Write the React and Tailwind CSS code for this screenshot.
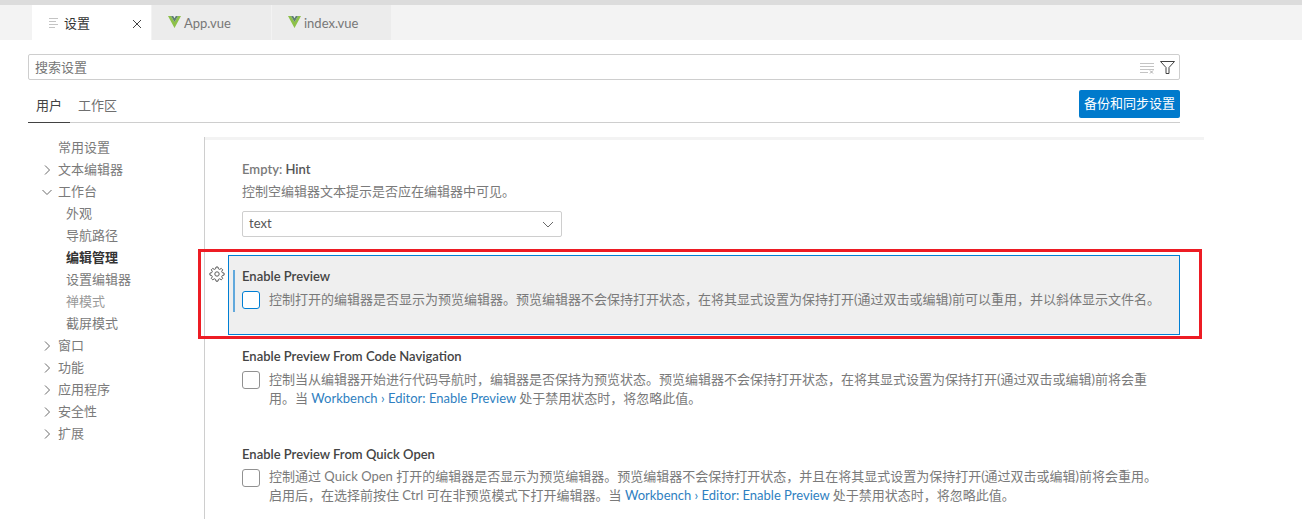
import React from "react";

const font = { fontFamily: 'Lato,"Noto Sans CJK SC",sans-serif' };

function Vue() {
  return (
    <svg width="13" height="12" viewBox="0 0 13 12" className="shrink-0">
      <path d="M0 0h3l3.5 6L10 0h3L6.5 12z" fill="#8dc149" />
      <path d="M3 0h2.2l1.3 2.3L7.8 0H10L6.5 6z" fill="#5f7f73" />
    </svg>
  );
}

function Chevron({ open }) {
  return (
    <svg width="16" height="16" viewBox="0 0 16 16" fill="none" stroke="#6a6a6a" strokeWidth="1" className="shrink-0">
      {open ? <path d="M3.5 6l4.5 4.5L12.5 6" /> : <path d="M6 3.5L10.5 8 6 12.5" />}
    </svg>
  );
}

function Tree({ label, chev, open, child, bold, faded }) {
  return (
    <div className={"h-[22px] flex items-center text-[13px] " + (child ? "pl-[66px] " : "pl-[58px] relative ") + (bold ? "font-semibold text-[#333333]" : faded ? "text-[#9a9a9a]" : "text-[#7a7a7a]")}>
      {chev && (
        <span className="absolute left-[39px] top-[3px]">
          <Chevron open={open} />
        </span>
      )}
      {label}
    </div>
  );
}

function Check({ focus }) {
  return (
    <div className={"w-[18px] h-[18px] rounded-[3px] bg-white border shrink-0 " + (focus ? "border-[#007fd4]" : "border-[#919191]")} />
  );
}

function Link({ children }) {
  return <span className="text-[#2f7fc1]">{children}</span>;
}

export default function App() {
  return (
    <div style={font} className="w-[1302px] h-[519px] overflow-hidden bg-white relative flex flex-col">
      <div className="h-[5px] bg-[#dcdcdc]" />
      <div className="h-[35px] bg-[#f3f3f3] flex pl-[32px] text-[13px]">
        <div className="w-[119px] bg-white flex items-center pl-[17px] pr-[9px] pt-[2px] text-[#333333]">
          <svg width="12" height="12" viewBox="0 0 12 12" stroke="#c4c4c4" strokeWidth="1" className="mr-[3px] -translate-y-[1px]">
            <path d="M0 1.5h9M0 4.5h7M0 7.5h9M0 10.5h6" />
          </svg>
          <span>设置</span>
          <svg width="10" height="10" viewBox="0 0 10 10" stroke="#424242" strokeWidth="1" className="ml-auto">
            <path d="M1 1l8 8M9 1l-8 8" />
          </svg>
        </div>
        <div className="w-[119px] ml-[1px] bg-[#ececec] flex items-center pl-[16px] pt-[2px] gap-[3px] text-[#777777]">
          <span className="-translate-y-[2px]"><Vue /></span>App.vue
        </div>
        <div className="w-[119px] ml-[1px] bg-[#ececec] flex items-center pl-[16px] pt-[2px] gap-[3px] text-[#777777]">
          <span className="-translate-y-[2px]"><Vue /></span>index.vue
        </div>
      </div>

      <div className="pl-[28px] w-[1180px] pt-[14px]">
        <div className="h-[26px] border border-[#cecece] rounded-[2px] flex items-center pl-[6px] pr-[4px] pt-[1px] text-[13px] text-[#767676]">
          <span>搜索设置</span>
          <svg width="15" height="12" viewBox="0 0 15 12" stroke="#c4c4c4" strokeWidth="1" className="ml-auto mr-[5px]">
            <path d="M0 1.5h14M0 4.5h14M0 7.5h14M0 10.5h8" />
            <path d="M10 8.5l3 3M13 8.5l-3 3" stroke="#aaaaaa" />
          </svg>
          <svg width="15" height="15" viewBox="0 0 15 15" fill="none" stroke="#424242" strokeWidth="1">
            <path d="M.5 1.5h14L9 7.5v6H6v-6z" />
          </svg>
        </div>
        <div className="h-[43px] flex items-end border-b border-[#cecece] relative">
          <div className="h-[42px] w-[42px] flex items-center justify-center pt-[9px] text-[13px] text-[#424242] border-b border-[#424242] -mb-[1px]">用户</div>
          <div className="h-[42px] flex items-center pt-[9px] pl-[8px] text-[13px] text-[#6f6f6f]">工作区</div>
          <div className="ml-auto mb-[4px] h-[28px] w-[101px] bg-[#007acc] rounded-[2px] text-white text-[13px] flex items-center justify-center">备份和同步设置</div>
        </div>
      </div>

      <div className="flex flex-1 min-h-0 mt-[14px]">
        <div className="w-[204px] shrink-0">
          <Tree label="常用设置" />
          <Tree label="文本编辑器" chev />
          <Tree label="工作台" chev open />
          <Tree label="外观" child />
          <Tree label="导航路径" child />
          <Tree label="编辑管理" child bold />
          <Tree label="设置编辑器" child />
          <Tree label="禅模式" child faded />
          <Tree label="截屏模式" child />
          <Tree label="窗口" chev />
          <Tree label="功能" chev />
          <Tree label="应用程序" chev />
          <Tree label="安全性" chev />
          <Tree label="扩展" chev />
        </div>
        <div className="flex-1 border-l border-[#cecece] relative">
          <div className="w-[999px] h-[3px] bg-[#f3f3f3]" />
          <div className="pl-[37px] pt-[20px] w-[976px] text-[13px] leading-[19px] text-[#7a7a7a]">
            <div className="font-semibold h-[20px] text-[#7a7a7a]">Empty: <span className="text-[#555555]">Hint</span></div>
            <div className="mt-[2px] h-[19px]">控制空编辑器文本提示是否应在编辑器中可见。</div>
            <div className="mt-[10px] w-[320px] h-[26px] border border-[#cecece] rounded-[2px] flex items-center pl-[6px] pr-[5px] pb-[1px] text-[#555555]">
              text
              <svg width="16" height="16" viewBox="0 0 16 16" fill="none" stroke="#6a6a6a" className="ml-auto"><path d="M3 6l5 5 5-5" /></svg>
            </div>
          </div>

          <div className="relative ml-[23px] mt-[18px] w-[952px] h-[80px] bg-[#efefef] border border-[#007fd4] pl-[13px] pt-[11px] text-[13px] text-[#7a7a7a]">
            <svg width="16" height="16" viewBox="0 0 16 16" fill="none" stroke="#5a5a5a" className="absolute left-[-20px] top-[10px]">
              <circle cx="8" cy="8" r="2.2" />
              <path d="M7 1h2l.4 1.8 1.3.6 1.6-1 1.4 1.4-1 1.6.6 1.3 1.8.4v2l-1.8.4-.6 1.3 1 1.6-1.4 1.4-1.6-1-1.3.6-.4 1.8H7l-.4-1.8-1.3-.6-1.6 1-1.4-1.4 1-1.6-.6-1.3-1.8-.4v-2l1.8-.4.6-1.3-1-1.6 1.4-1.4 1.6 1 1.3-.6z" />
            </svg>
            <div className="absolute left-[4px] top-[14px] w-[2px] h-[42px] bg-[#62a9dc]" />
            <div className="font-semibold h-[19px] leading-[19px] text-[#444444]">Enable Preview</div>
            <div className="flex gap-[9px] mt-[5px]">
              <Check focus />
              <div className="leading-[19px] -mt-[1px]">控制打开的编辑器是否显示为预览编辑器。预览编辑器不会保持打开状态，在将其显式设置为保持打开(通过双击或编辑)前可以重用，并以斜体显示文件名。</div>
            </div>
          </div>

          <div className="pl-[37px] w-[960px] text-[13px] text-[#7a7a7a] leading-[19px]">
            <div className="font-semibold mt-[12px] h-[19px] text-[#444444]">Enable Preview From Code Navigation</div>
            <div className="flex gap-[9px] mt-[5px]">
              <Check />
              <div className="w-[890px] -mt-[1px]">控制当从编辑器开始进行代码导航时，编辑器是否保持为预览状态。预览编辑器不会保持打开状态，在将其显式设置为保持打开(通过双击或编辑)前将会重用。当 <Link>Workbench › Editor: Enable Preview</Link> 处于禁用状态时，将忽略此值。</div>
            </div>
            <div className="font-semibold mt-[37px] h-[19px] text-[#444444]">Enable Preview From Quick Open</div>
            <div className="flex gap-[9px] mt-[5px]">
              <Check />
              <div className="w-[895px] -mt-[2px]">控制通过 Quick Open 打开的编辑器是否显示为预览编辑器。预览编辑器不会保持打开状态，并且在将其显式设置为保持打开(通过双击或编辑)前将会重用。启用后，在选择前按住 Ctrl 可在非预览模式下打开编辑器。当 <Link>Workbench › Editor: Enable Preview</Link> 处于禁用状态时，将忽略此值。</div>
            </div>
          </div>
        </div>
      </div>

      <div className="absolute left-[198px] top-[249px] w-[1004px] h-[90px] border-[3px] border-[#ed1c24] pointer-events-none" />
    </div>
  );
}
